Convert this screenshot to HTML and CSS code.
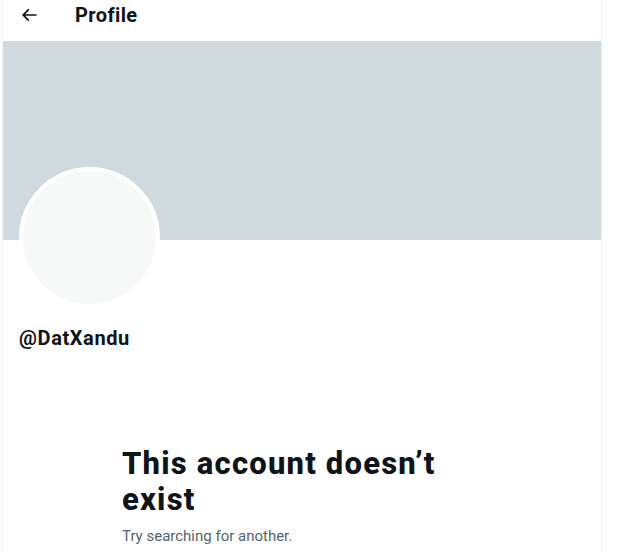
FILE: index.html
```html
<!DOCTYPE html>
<html lang="en">
<head>
    <meta charset="UTF-8">
    <meta name="viewport" content="width=device-width, initial-scale=1.0">
    <title>Profile</title>
    <link rel="stylesheet" href="styles.css">
</head>
<body>
    <div class="column">
        <div class="topbar">
            <svg class="back" viewBox="0 0 24 24" aria-hidden="true">
                <path d="M7.414 13l5.043 5.04-1.414 1.42L3.586 12l7.457-7.46 1.414 1.42L7.414 11H21v2H7.414z"></path>
            </svg>
            <h2 class="title">Profile</h2>
        </div>
        <div class="banner"></div>
        <div class="profile">
            <div class="avatar"></div>
            <div class="handle">@DatXandu</div>
        </div>
        <div class="empty">
            <h1 class="empty-title">This account doesn’t exist</h1>
            <p class="empty-text">Try searching for another.</p>
        </div>
    </div>
</body>
</html>
```

FILE: styles.css
```css
body {
    margin: 0;
    background-color: #fff;
    color: #0f1419;
    font-family: Roboto, "Liberation Sans", sans-serif;
}
.column {
    margin-left: 2px;
    width: 600px;
    min-height: 100vh;
    box-sizing: border-box;
    border-left: 1px solid #eff3f4;
    border-right: 1px solid #eff3f4;
}
.topbar {
    height: 41px;
    box-sizing: border-box;
    display: flex;
    align-items: center;
    gap: 36px;
    padding: 0 16px 11px;
}
.back {
    width: 20px;
    height: 20px;
    fill: #0f1419;
}
.title {
    margin: 0;
    font-size: 20px;
    font-weight: 700;
    line-height: 24px;
    letter-spacing: 0.4px;
}
.banner {
    height: 199px;
    background-color: #cfd9de;
}
.profile {
    padding: 0 16px;
}
.avatar {
    width: 141px;
    height: 141px;
    margin-top: -73px;
    box-sizing: border-box;
    border: 4px solid #fff;
    border-radius: 50%;
    background-color: #f7f9f9;
}
.handle {
    margin-top: 18px;
    font-size: 20px;
    font-weight: 700;
    line-height: 24px;
    letter-spacing: 0.6px;
}
.empty {
    max-width: 400px;
    margin: 96px auto 0;
    padding: 0 20px;
    box-sizing: border-box;
}
.empty-title {
    margin: 0 0 8px;
    font-size: 31px;
    font-weight: 800;
    line-height: 36px;
    letter-spacing: 1.2px;
}
.empty-text {
    margin: 0;
    font-size: 15px;
    line-height: 20px;
    color: #536471;
}
```
